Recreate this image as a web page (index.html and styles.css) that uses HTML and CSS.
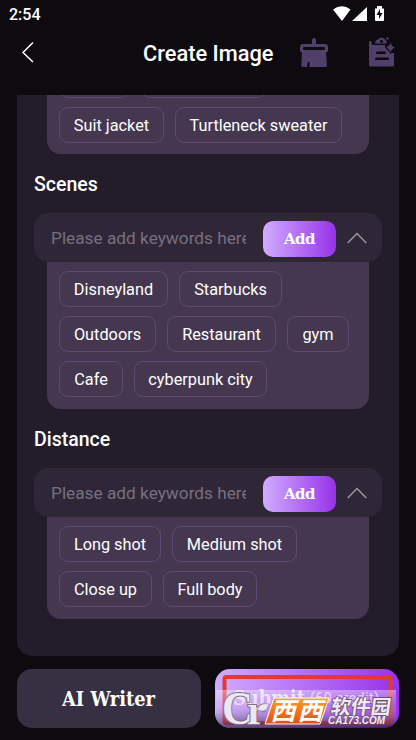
FILE: index.html
```html
<!DOCTYPE html>
<html lang="en">
<head>
<meta charset="utf-8">
<title>Create Image</title>
<link rel="stylesheet" href="styles.css">
</head>
<body>
<div class="status">
  <span class="time">2:54</span>
  <svg class="status-icons" width="54" height="16" viewBox="0 0 54 16"><path fill="#fff" d="M0 3.500Q9-3 17.500 3.500L9 15zM19 15 34 1V15zM42 2.500h2V0h5v2.500h2V14q0 1-1 1h-7q-1 0-1-1z"/><path fill="#0e0b10" d="m47 3-3.500 6H46v4l3.500-6H47z"/></svg>
</div>
<header class="header">
  <svg class="back" width="14" height="22" viewBox="0 0 14 22"><path fill="none" stroke="#fff" stroke-width="1.500" d="M12 1.500 2 11.500l10 9.500"/></svg>
  <h1 class="title">Create Image</h1>
  <svg class="broom" width="30" height="30" viewBox="0 0 30 30"><path fill="#4f3f69" fill-rule="evenodd" d="M13 6V2q0-2 2-2t2 2v4h9q3 0 3 3v4q0 1-2 1.500l1 12.500q0 2-2 2H10.500v-5q-1.500-1-2 1l-.5 4H4q-2 0-1.700-2L3 14.500q-2-.5-2-1.500V9q0-3 3-3zM5 9q-1 0-1 1.500T5 12h20q1 0 1-1.500T25 9z"/></svg>
  <svg class="note" width="28" height="30" viewBox="0 0 28 30"><path fill="#4f3f69" fill-rule="evenodd" d="M1 5q0-1 1-1h1.500v2q0 2 2 2H17q0 4 5 7 1 1 2 1h2v12q0 1.500-1.500 1.500h-22Q1 29.500 1 28zM9 14.500q-1 0-1 1.200T9 17h8q1 0 1-1.300t-1-1.200zM8 20.500q-1 0-1 1.200T8 23h12q1 0 1-1.300t-1-1.200z"/><path fill="#4f3f69" fill-rule="evenodd" d="M7 6.500Q7 3 10 2.500q3-4 7 0 2 .5 1.500 4zM13.500 3a1.500 1.500 0 1 0 .1 0z"/><path fill="#4f3f69" stroke="#0e0b10" stroke-width=".9" d="M22.500 4q.8 5.500 5.500 6.500-4.700 1-5.500 6.500-.8-5.500-5.500-6.500 4.700-1 5.500-6.500z"/><circle cx="19.500" cy="1.500" r="1.200" fill="#4f3f69"/></svg>
</header>
<main class="sheet">
  <div class="options clipped">
    <span class="chip stub-a"></span><span class="chip stub-b"></span>
    <span class="chip w105">Suit jacket</span><span class="chip w167">Turtleneck sweater</span>
  </div>
  <h2 class="label">Scenes</h2>
  <div class="field">
    <span class="hint">Please add keywords here</span>
    <button class="add">Add</button>
    <svg class="up" width="20" height="12" viewBox="0 0 20 12"><path fill="none" stroke="#9b97a0" stroke-width="1.500" d="m.7 11 9.300-9.500 9.300 9.500"/></svg>
  </div>
  <div class="options">
    <span class="chip w109">Disneyland</span><span class="chip w103">Starbucks</span>
    <span class="chip w97">Outdoors</span><span class="chip w109">Restaurant</span><span class="chip w62">gym</span>
    <span class="chip w64">Cafe</span><span class="chip w133">cyberpunk city</span>
  </div>
  <h2 class="label">Distance</h2>
  <div class="field">
    <span class="hint">Please add keywords here</span>
    <button class="add">Add</button>
    <svg class="up" width="20" height="12" viewBox="0 0 20 12"><path fill="none" stroke="#9b97a0" stroke-width="1.500" d="m.7 11 9.300-9.500 9.300 9.500"/></svg>
  </div>
  <div class="options">
    <span class="chip w102">Long shot</span><span class="chip w125">Medium shot</span>
    <span class="chip w93">Close up</span><span class="chip w94">Full body</span>
  </div>
</main>
<footer class="actions">
  <button class="writer"><svg width="94" height="26" viewBox="0 0 94 26"><text class="slab" x="0" y="20" font-size="20.500" textLength="93" lengthAdjust="spacingAndGlyphs">AI Writer</text></svg></button>
  <div class="submit">
    <svg width="184" height="60" viewBox="0 0 184 60">
      <defs>
        <linearGradient id="shade" x2="0" y2="1"><stop stop-color="#fff" stop-opacity=".4"/><stop offset=".45" stop-color="#d4bde8" stop-opacity=".25"/><stop offset="1" stop-color="#130b20" stop-opacity=".65"/></linearGradient>
        <linearGradient id="orange" x2="0" y2="1"><stop stop-color="#f7a51e"/><stop offset="1" stop-color="#e64b16"/></linearGradient>
      </defs>
      <text class="slab faded" x="18" y="36" font-size="21" textLength="72" lengthAdjust="spacingAndGlyphs">Submit</text>
      <text class="cost" x="95" y="34" font-size="14" textLength="69">(60 credit)</text>
      <rect x="9.500" y="8" width="166" height="46" rx="2" fill="none" stroke="#e03a35" stroke-width="4"/>
      <path fill="url(#shade)" d="M1 21h180v38H1z"/>
      <g class="mark-c"><text x="7" y="55" font-size="47" textLength="31" lengthAdjust="spacingAndGlyphs">C</text><text x="32" y="55" font-size="41">r</text></g>
      <path fill="#eee7f3" stroke="#817087" stroke-width=".6" d="M42 41q3-8 12-6-2 10-12 6z"/>
      <path fill="url(#orange)" stroke="#fff" stroke-width="1" d="M59 29h55l-9 26H50z"/>
      <g class="brand" transform="translate(0 51) skewX(-14)"><text x="55.500" y="0" font-size="25">西</text><text x="82.500" y="0" font-size="25">西</text></g>
      <g transform="translate(0 45) skewX(-8)"><text class="garden" x="115" y="0" font-size="20" textLength="60">软件园</text></g>
      <text class="site" x="113" y="55" font-size="10" textLength="57" lengthAdjust="spacingAndGlyphs">CA173.COM</text>
    </svg>
  </div>
</footer>
</body>
</html>
```
FILE: styles.css
```css
* { box-sizing: border-box; }
body { margin: 0; width: 416px; height: 740px; overflow: hidden; background: #0e0b10; color: #fff; font-family: Roboto, sans-serif; display: flex; flex-direction: column; }
.status { height: 30px; display: flex; justify-content: space-between; align-items: flex-start; padding: 6px 32px 0 9px; }
.time { font-size: 16px; line-height: 18px; font-weight: 500; }
.status-icons { margin-right: -3px; }
.header { height: 65px; display: flex; align-items: flex-start; padding-left: 21px; }
.back { margin-top: 11px; }
.title { margin: 9px 0 0 108px; width: 131px; font-size: 21.800px; line-height: 30px; font-weight: 500; white-space: nowrap; }
.broom { margin: 8px 0 0 25px; }
.note { margin: 7px 0 0 39px; }
.sheet { width: 382px; height: 561px; margin-left: 17px; background: #231d2b; border-radius: 0 0 15px 15px; overflow: hidden; flex: none; }
.options { width: 322px; margin-left: 30px; padding: 9px 12px 12px; background: #463750; border-radius: 0 0 14px 14px; display: flex; flex-wrap: wrap; gap: 9px 11px; }
.options.clipped { margin-top: -33px; padding-top: 0; padding-bottom: 11px; }
.chip { height: 36px; padding-top: 1px; border: 1px solid #5d4971; border-radius: 9px; display: flex; align-items: center; justify-content: center; font-size: 16.300px; white-space: nowrap; }
.stub-a { width: 71px; }
.stub-b { width: 126px; margin-right: 60px; }
.w62 { width: 62px; } .w64 { width: 64px; } .w93 { width: 93px; } .w94 { width: 94px; }
.w97 { width: 97px; } .w102 { width: 102px; } .w103 { width: 103px; } .w105 { width: 105px; }
.w109 { width: 109px; } .w125 { width: 125px; } .w133 { width: 133px; } .w167 { width: 167px; }
.label { margin: 0 0 0 17px; height: 59px; padding-top: 18px; font-size: 19.500px; line-height: 26px; font-weight: 500; }
.field { width: 348px; height: 49px; margin-left: 17px; padding-left: 17px; background: #2f2638; border-radius: 15px; display: flex; align-items: center; }
.hint { width: 195px; overflow: hidden; white-space: nowrap; color: #77707f; font-size: 17.250px; line-height: 24px; }
.add { width: 73px; height: 36px; margin: 3px 0 0 17px; padding: 0; border: 0; border-radius: 10px; background: linear-gradient(90deg, #d0acff, #9732e8); color: #fff; font: 700 15px "DejaVu Serif", serif; letter-spacing: -.6px; }
.up { margin-left: 11px; }
.actions { display: flex; gap: 14px; padding: 13px 0 0 17px; }
.writer { width: 184px; height: 59px; padding: 0; border: 0; border-radius: 15px; background: #373043; display: flex; align-items: center; justify-content: center; }
.slab { font-family: "DejaVu Serif", serif; font-weight: 700; fill: #fff; }
.faded { fill-opacity: .75; }
.submit { width: 184px; height: 59px; border-radius: 15px; overflow: hidden; background: linear-gradient(90deg, #d0acff, #9732e8); }
.cost { font-family: Roboto, sans-serif; fill: #fff; fill-opacity: .7; }
.mark-c { font-family: "Liberation Serif", serif; font-weight: 700; fill: #eee7f3; stroke: #817087; stroke-width: 2px; paint-order: stroke; }
.brand { font-family: "Noto Sans CJK SC", sans-serif; font-weight: 700; fill: #fff; }
.garden { font-family: "Noto Sans CJK SC", sans-serif; font-weight: 700; fill: #f1eaf4; stroke: #695071; stroke-width: 1.500px; paint-order: stroke; }
.site { font-family: "Liberation Sans", sans-serif; font-weight: 700; font-style: italic; fill: #f5edf7; stroke: #695071; stroke-width: 1px; paint-order: stroke; }
```
